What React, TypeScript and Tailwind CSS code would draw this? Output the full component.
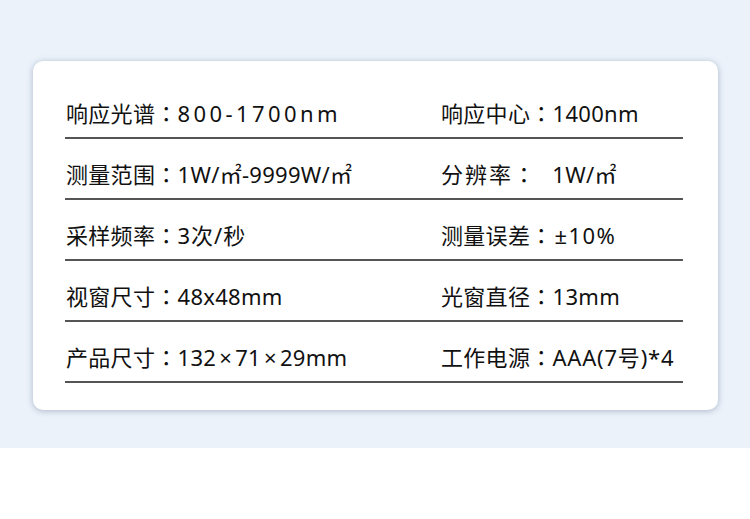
import React from 'react';

// centred full-width colon, as in the screenshot
const C = () => <span style={{ fontFamily: '"Noto Sans CJK TC", sans-serif' }}>：</span>;
const X = () => <span className="inline-block w-[19px] text-center">×</span>;

const rows: [React.ReactNode, React.ReactNode][] = [
  [
    <>
      响应光谱<C /><span className="tracking-[3.4px]">800-1700nm</span>
    </>,
    <>响应中心<C />1400nm</>,
  ],
  [
    <>测量范围<C />1W/㎡-9999W/㎡</>,
    <>
      <span className="tracking-[2px]">分辨率</span><C /><span className="ml-[17px]">1W/㎡</span>
    </>,
  ],
  [
    <>采样频率<C /><span className="tracking-[1px]">3次/秒</span></>,
    <>测量误差<C /><span className="ml-[2px] tracking-[1.4px]">±10%</span></>,
  ],
  [<>视窗尺寸<C />48x48mm</>, <>光窗直径<C />13mm</>],
  [<>产品尺寸<C />132<X />71<X />29mm</>, <>工作电源<C /><span className="tracking-[0.8px]">AAA(7号)*4</span></>],
];

const App: React.FC = () => {
  return (
    <div
      className="w-[750px] h-[519px] bg-white"
      style={{ fontFamily: '"Noto Sans", "Noto Sans CJK SC", sans-serif' }}
    >
      <div className="h-[448px] bg-[#ebf2fa] pt-[61px]">
        <div className="ml-[33px] w-[685px] h-[349px] bg-white rounded-[10px] shadow-[0_1px_6px_rgba(90,110,140,0.45)] pt-[17px] pl-8">
          {rows.map(([left, right], i) => (
            <div key={i} className="w-[618px] border-b-2 border-[#555555]">
              <div className="h-[59px] pt-[23px] flex text-[22px] leading-[22px] text-[#111111] tracking-[0.3px]">
                <div className="w-[376px] pl-[1px] whitespace-nowrap">{left}</div>
                <div className="whitespace-nowrap">{right}</div>
              </div>
            </div>
          ))}
        </div>
      </div>
    </div>
  );
};

export default App;
